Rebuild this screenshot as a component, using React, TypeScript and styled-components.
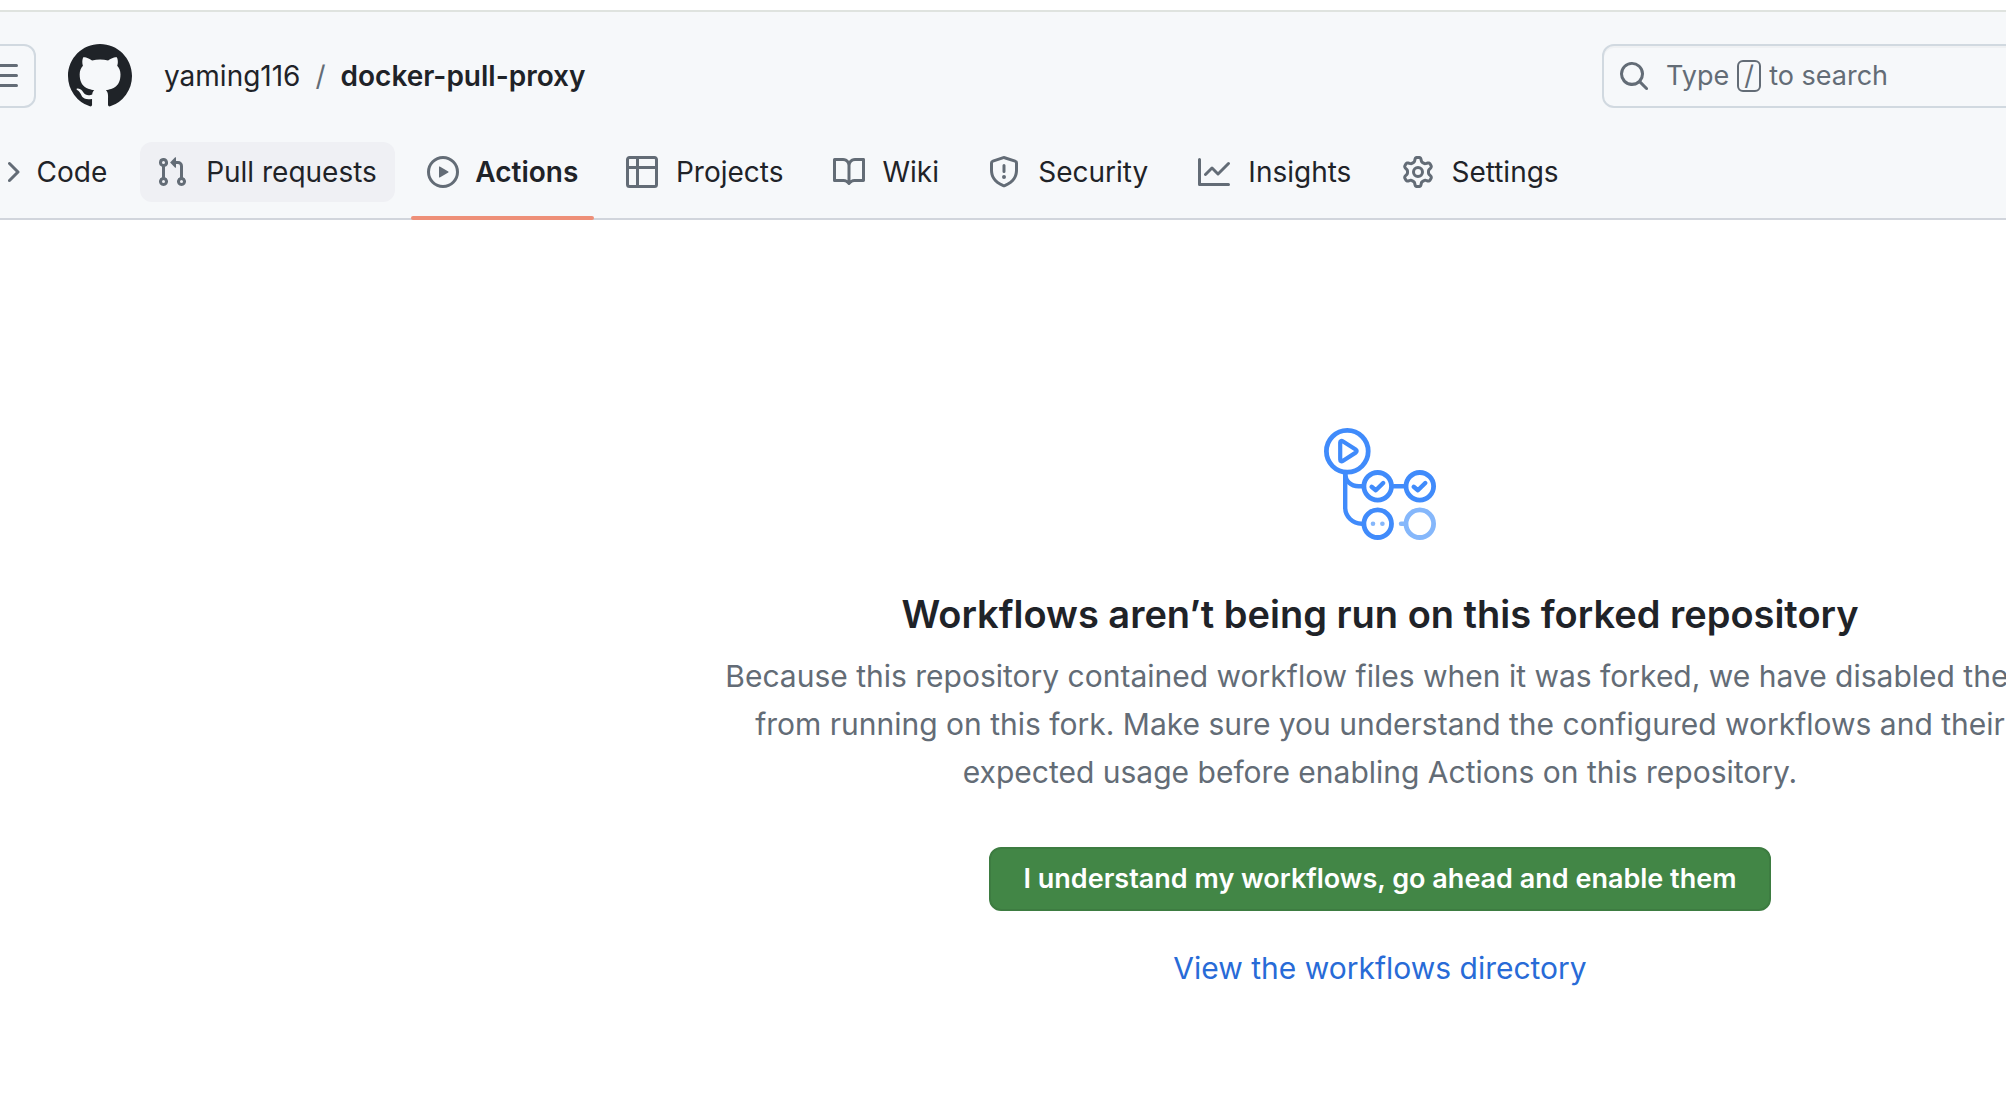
import React from "react";
import styled, { createGlobalStyle } from "styled-components";

const GlobalStyle = createGlobalStyle`
  *, *::before, *::after { box-sizing: border-box; }
  html, body { margin: 0; overflow-x: hidden; background: #ffffff; }
  body {
    font-family: Inter, "Noto Sans", sans-serif;
    font-size: 27px;
    line-height: 40px;
    color: #1f2328;
  }
  a { color: inherit; text-decoration: none; }
  button { font: inherit; cursor: pointer; }
`;

/* The page is wider than the window and scrolled a little to the right. */
const Page = styled.div`
  margin-left: -60px;
  margin-right: -814px;
  padding-top: 10px;
`;

const Header = styled.header`
  background: #f6f8fa;
  border-top: 2px solid #dfe3df;
  border-bottom: 2px solid #d1d5dc;
`;

const TopBar = styled.div`
  display: flex;
  align-items: center;
  padding: 32px 32px 24px;
`;

const MenuButton = styled.button`
  display: grid;
  place-items: center;
  width: 64px;
  height: 64px;
  padding: 0;
  border: 2px solid #d1d9e0;
  border-radius: 12px;
  background: transparent;
  color: #636c76;
`;

const HomeLink = styled.a`
  display: flex;
  margin-left: 32px;
  color: #1f2328;
`;

const Breadcrumb = styled.nav`
  display: flex;
  gap: 15px;
  flex: 1;
  margin-left: 32px;
  font-size: 28px;
`;

const Crumb = styled.a<{ $current?: boolean }>`
  font-weight: ${(p) => (p.$current ? 600 : 400)};
`;

const Separator = styled.span`
  color: #636c76;
`;

const SearchButton = styled.button`
  display: flex;
  align-items: center;
  gap: 16px;
  flex: 0 0 1186px;
  height: 64px;
  padding: 0 14px;
  border: 2px solid #d1d9e0;
  border-radius: 12px;
  background: transparent;
  box-shadow: inset 0 2px 0 rgba(31, 35, 40, 0.03);
  color: #636c76;
`;

const SearchHint = styled.span`
  display: flex;
  align-items: center;
  gap: 8px;
`;

const Key = styled.kbd`
  display: grid;
  place-items: center;
  width: 24px;
  height: 32px;
  border: 2px solid #636c76;
  border-radius: 6px;
  font: inherit;
  line-height: 28px;
`;

const Tabs = styled.nav`
  display: flex;
  gap: 16px;
  padding: 0 32px;
  font-size: 28px;
`;

const Tab = styled.a<{ $selected?: boolean; $hovered?: boolean }>`
  position: relative;
  display: flex;
  align-items: center;
  gap: 16px;
  height: 60px;
  margin: 10px 0 16px;
  padding: 0 16px;
  border-radius: 12px;
  background: ${(p) => (p.$hovered ? "#eff0f4" : "transparent")};
  font-weight: ${(p) => (p.$selected ? 600 : 400)};
  white-space: nowrap;

  svg { color: #636c76; }

  &::after {
    content: "";
    display: ${(p) => (p.$selected ? "block" : "none")};
    position: absolute;
    left: 0;
    right: 0;
    bottom: -18px;
    height: 4px;
    border-radius: 2px;
    background: #ee8f78;
  }
`;

/* Reserves the bold width of the label so that selecting a tab moves nothing. */
const TabLabel = styled.span`
  display: grid;
  justify-items: center;

  &::before {
    content: attr(data-content);
    height: 0;
    visibility: hidden;
    font-weight: 600;
  }
`;

const Main = styled.main`
  display: flex;
  flex-direction: column;
  align-items: center;
  padding: 208px 32px 64px;
  text-align: center;
`;

const Title = styled.h1`
  margin: 44px 0 0;
  font-size: 38px;
  line-height: 60px;
  font-weight: 600;
`;

const Description = styled.p`
  max-width: 1360px;
  margin: 8px 0 0;
  font-size: 30px;
  line-height: 48px;
  color: #636c76;
`;

const EnableButton = styled.button`
  height: 64px;
  margin-top: 51px;
  padding: 0 32px;
  border: 2px solid #3d7c41;
  border-radius: 12px;
  background: #428646;
  color: #ffffff;
  font-weight: 600;
`;

const DirectoryLink = styled.a`
  margin-top: 33px;
  font-size: 30px;
  line-height: 48px;
  color: #286bd7;
`;

const PATHS = {
  bars: "M1 2.75A.75.75 0 0 1 1.75 2h12.5a.75.75 0 0 1 0 1.5H1.75A.75.75 0 0 1 1 2.75Zm0 5A.75.75 0 0 1 1.75 7h12.5a.75.75 0 0 1 0 1.5H1.75A.75.75 0 0 1 1 7.75ZM1.75 12h12.5a.75.75 0 0 1 0 1.5H1.75a.75.75 0 0 1 0-1.5Z",
  mark: "M8 0c4.42 0 8 3.58 8 8a8.013 8.013 0 0 1-5.45 7.59c-.4.08-.55-.17-.55-.38 0-.27.01-1.13.01-2.2 0-.75-.25-1.23-.54-1.48 1.78-.2 3.65-.88 3.65-3.95 0-.88-.31-1.59-.82-2.15.08-.2.36-1.02-.08-2.12 0 0-.67-.22-2.2.82-.64-.18-1.32-.27-2-.27-.68 0-1.36.09-2 .27-1.53-1.03-2.2-.82-2.2-.82-.44 1.1-.16 1.92-.08 2.12-.51.56-.82 1.28-.82 2.15 0 3.06 1.86 3.75 3.64 3.95-.23.2-.44.55-.51 1.07-.46.21-1.61.55-2.33-.66-.15-.24-.6-.83-1.23-.82-.67.01-.27.38.01.53.34.19.73.9.82 1.13.16.45.68 1.31 2.69.94 0 .67.01 1.3.01 1.49 0 .21-.15.45-.55.38A7.995 7.995 0 0 1 0 8c0-4.42 3.58-8 8-8Z",
  search: "M10.68 11.74a6 6 0 0 1-7.922-8.982 6 6 0 0 1 8.982 7.922l3.04 3.04a.749.749 0 0 1-.326 1.275.749.749 0 0 1-.734-.215ZM11.5 7a4.499 4.499 0 1 0-8.997 0A4.499 4.499 0 0 0 11.5 7Z",
  code: "m11.28 3.22 4.25 4.25a.75.75 0 0 1 0 1.06l-4.25 4.25a.749.749 0 0 1-1.275-.326.749.749 0 0 1 .215-.734L13.94 8l-3.72-3.72a.749.749 0 0 1 .326-1.275.749.749 0 0 1 .734.215Zm-6.56 0a.751.751 0 0 1 1.042.018.751.751 0 0 1 .018 1.042L2.06 8l3.72 3.72a.749.749 0 0 1-.326 1.275.749.749 0 0 1-.734-.215L.47 8.53a.75.75 0 0 1 0-1.06Z",
  pull: "M1.5 3.25a2.25 2.25 0 1 1 3 2.122v5.256a2.251 2.251 0 1 1-1.5 0V5.372A2.25 2.25 0 0 1 1.5 3.25Zm5.677-.177L9.573.677A.25.25 0 0 1 10 .854V2.5h1A2.5 2.5 0 0 1 13.5 5v5.628a2.251 2.251 0 1 1-1.5 0V5a1 1 0 0 0-1-1h-1v1.646a.25.25 0 0 1-.427.177L7.177 3.427a.25.25 0 0 1 0-.354ZM3.75 2.5a.75.75 0 1 0 0 1.5.75.75 0 0 0 0-1.5Zm0 9.5a.75.75 0 1 0 0 1.5.75.75 0 0 0 0-1.5Zm8.25.75a.75.75 0 1 0 1.5 0 .75.75 0 0 0-1.5 0Z",
  play: "M8 0a8 8 0 1 1 0 16A8 8 0 0 1 8 0ZM1.5 8a6.5 6.5 0 1 0 13 0 6.5 6.5 0 0 0-13 0Zm4.879-2.773 4.264 2.559a.25.25 0 0 1 0 .428l-4.264 2.559A.25.25 0 0 1 6 10.559V5.442a.25.25 0 0 1 .379-.215Z",
  table: "M0 1.75C0 .784.784 0 1.75 0h12.5C15.216 0 16 .784 16 1.75v12.5A1.75 1.75 0 0 1 14.25 16H1.75A1.75 1.75 0 0 1 0 14.25ZM6.5 6.5v8h7.75a.25.25 0 0 0 .25-.25V6.5Zm8-1.5V1.75a.25.25 0 0 0-.25-.25H6.5V5Zm-13 1.5v7.75c0 .138.112.25.25.25H5v-8ZM5 5V1.5H1.75a.25.25 0 0 0-.25.25V5Z",
  book: "M0 1.75A.75.75 0 0 1 .75 1h4.253c1.227 0 2.317.59 3 1.501A3.743 3.743 0 0 1 11.006 1h4.245a.75.75 0 0 1 .75.75v10.5a.75.75 0 0 1-.75.75h-4.507a2.25 2.25 0 0 0-1.591.659l-.622.621a.75.75 0 0 1-1.06 0l-.622-.621A2.25 2.25 0 0 0 5.258 13H.75a.75.75 0 0 1-.75-.75Zm7.251 10.324.004-5.073-.002-2.253A2.25 2.25 0 0 0 5.003 2.5H1.5v9h3.757a3.75 3.75 0 0 1 1.994.574ZM8.755 4.75l-.004 7.322a3.752 3.752 0 0 1 1.992-.572H14.5v-9h-3.495a2.25 2.25 0 0 0-2.25 2.25Z",
  shield: "M7.467.133a1.748 1.748 0 0 1 1.066 0l5.25 1.68A1.75 1.75 0 0 1 15 3.48V7c0 1.566-.32 3.182-1.303 4.682-.983 1.498-2.585 2.813-5.032 3.855a1.697 1.697 0 0 1-1.33 0c-2.447-1.042-4.049-2.357-5.032-3.855C1.32 10.182 1 8.566 1 7V3.48a1.75 1.75 0 0 1 1.217-1.667Zm.61 1.429a.25.25 0 0 0-.153 0l-5.25 1.68a.25.25 0 0 0-.174.238V7c0 1.358.275 2.666 1.057 3.86.784 1.194 2.121 2.34 4.366 3.297a.196.196 0 0 0 .154 0c2.245-.956 3.582-2.104 4.366-3.298C13.225 9.666 13.5 8.36 13.5 7V3.48a.251.251 0 0 0-.174-.237l-5.25-1.68ZM8.75 4.75v3a.75.75 0 0 1-1.5 0v-3a.75.75 0 0 1 1.5 0ZM9 10.5a1 1 0 1 1-2 0 1 1 0 0 1 2 0Z",
  graph: "M1.5 1.75V13.5h13.75a.75.75 0 0 1 0 1.5H.75a.75.75 0 0 1-.75-.75V1.75a.75.75 0 0 1 1.5 0Zm14.28 2.53-5.25 5.25a.75.75 0 0 1-1.06 0L7 7.06 4.28 9.78a.751.751 0 0 1-1.042-.018.751.751 0 0 1-.018-1.042l3.25-3.25a.75.75 0 0 1 1.06 0L10 7.94l4.72-4.72a.751.751 0 0 1 1.042.018.751.751 0 0 1 .018 1.042Z",
  gear: "M8 0a8.2 8.2 0 0 1 .701.031C9.444.095 9.99.645 10.16 1.29l.288 1.107c.018.066.079.158.212.224.231.114.454.243.668.386.123.082.233.09.299.071l1.103-.303c.644-.176 1.392.021 1.82.63.27.385.506.792.704 1.218.315.675.111 1.422-.364 1.891l-.814.806c-.049.048-.098.147-.088.294.016.257.016.515 0 .772-.01.147.038.246.088.294l.814.806c.475.469.679 1.216.364 1.891a7.977 7.977 0 0 1-.704 1.217c-.428.61-1.176.807-1.82.63l-1.102-.302c-.067-.019-.177-.011-.3.071a5.909 5.909 0 0 1-.668.386c-.133.066-.194.158-.211.224l-.29 1.106c-.168.646-.715 1.196-1.458 1.26a8.006 8.006 0 0 1-1.402 0c-.743-.064-1.289-.614-1.458-1.26l-.289-1.106c-.018-.066-.079-.158-.212-.224a5.738 5.738 0 0 1-.668-.386c-.123-.082-.233-.09-.299-.071l-1.103.303c-.644.176-1.392-.021-1.82-.63a8.12 8.12 0 0 1-.704-1.218c-.315-.675-.111-1.422.363-1.891l.815-.806c.05-.048.098-.147.088-.294a6.214 6.214 0 0 1 0-.772c.01-.147-.038-.246-.088-.294l-.815-.806C.635 6.045.431 5.298.746 4.623a7.92 7.92 0 0 1 .704-1.217c.428-.61 1.176-.807 1.82-.63l1.102.302c.067.019.177.011.3-.071.214-.143.437-.272.668-.386.133-.066.194-.158.211-.224l.29-1.106C6.009.645 6.556.095 7.299.03 7.53.01 7.764 0 8 0Zm-.571 1.525c-.036.003-.108.036-.137.146l-.289 1.105c-.147.561-.549.967-.998 1.189-.173.086-.34.183-.5.29-.417.278-.97.423-1.529.27l-1.103-.303c-.109-.03-.175.016-.195.045-.22.312-.412.644-.573.99-.014.031-.021.11.059.19l.815.806c.411.406.562.957.53 1.456a4.709 4.709 0 0 0 0 .582c.032.499-.119 1.05-.53 1.456l-.815.806c-.081.08-.073.159-.059.19.162.346.353.677.573.989.02.03.085.076.195.046l1.102-.303c.56-.153 1.113-.008 1.53.27.161.107.328.204.501.29.447.222.85.629.997 1.189l.289 1.105c.029.109.101.143.137.146a6.6 6.6 0 0 0 1.142 0c.036-.003.108-.036.137-.146l.289-1.105c.147-.561.549-.967.998-1.189.173-.086.34-.183.5-.29.417-.278.97-.423 1.529-.27l1.103.303c.109.029.175-.016.195-.045.22-.313.411-.644.573-.99.014-.031.021-.11-.059-.19l-.815-.806c-.411-.406-.562-.957-.53-1.456a4.709 4.709 0 0 0 0-.582c-.032-.499.119-1.05.53-1.456l.815-.806c.081-.08.073-.159.059-.19a6.464 6.464 0 0 0-.573-.989c-.02-.03-.085-.076-.195-.046l-1.102.303c-.56.153-1.113.008-1.53-.27a4.44 4.44 0 0 0-.501-.29c-.447-.222-.85-.629-.997-1.189l-.289-1.105c-.029-.11-.101-.143-.137-.146a6.6 6.6 0 0 0-1.142 0ZM11 8a3 3 0 1 1-6 0 3 3 0 0 1 6 0ZM9.5 8a1.5 1.5 0 1 0-3.001.001A1.5 1.5 0 0 0 9.5 8Z",
};

type IconName = keyof typeof PATHS;

function Icon({ name, size = 32 }: { name: IconName; size?: number }) {
  return (
    <svg width={size} height={size} viewBox="0 0 16 16" fill="currentColor" aria-hidden="true">
      <path d={PATHS[name]} />
    </svg>
  );
}

function WorkflowArt() {
  return (
    <svg width="112" height="112" viewBox="0 0 112 112" fill="none" aria-hidden="true">
      <g stroke="#408bfb" strokeWidth="4.8" strokeLinecap="round" strokeLinejoin="round">
        <circle cx="23.3" cy="23.3" r="20.9" />
        <path d="M16.2 14.6c0-1.6 1.2-2.2 2.5-1.4l13 8.4c1.3.8 1.3 2.2 0 3l-13 8.4c-1.3.8-2.5.2-2.5-1.4Z" strokeWidth="4.2" />
        <path d="M21.2 45v34.5c0 9 7.5 16.2 16.5 16.2" strokeWidth="4.4" />
        <path d="M21.2 45c0 8 5.5 13.3 13.5 13.3h3" strokeWidth="4.4" />
        <circle cx="53.7" cy="58.3" r="13.8" />
        <circle cx="95.8" cy="58.3" r="13.8" />
        <path d="M70 58.3h9.5" strokeWidth="4.4" />
        <circle cx="53.7" cy="95.7" r="13.8" />
        <path d="m47.6 58.8 4.2 3.5 7.4-7.3M89.7 58.8l4.2 3.5 7.4-7.3" strokeWidth="4.4" />
      </g>
      <g stroke="#85b7fb" strokeWidth="4.8" strokeLinecap="round">
        <circle cx="95.8" cy="95.7" r="13.8" />
        <path d="M77 95.7h3" strokeWidth="4.4" />
      </g>
      <circle cx="49" cy="95.7" r="2.3" fill="#85b7fb" />
      <circle cx="58.4" cy="95.7" r="2.3" fill="#85b7fb" />
    </svg>
  );
}

const TABS: { label: string; icon: IconName; selected?: boolean; hovered?: boolean }[] = [
  { label: "Code", icon: "code" },
  { label: "Pull requests", icon: "pull", hovered: true },
  { label: "Actions", icon: "play", selected: true },
  { label: "Projects", icon: "table" },
  { label: "Wiki", icon: "book" },
  { label: "Security", icon: "shield" },
  { label: "Insights", icon: "graph" },
  { label: "Settings", icon: "gear" },
];

export default function App() {
  return (
    <Page>
      <GlobalStyle />
      <Header>
        <TopBar>
          <MenuButton type="button" aria-label="Open menu">
            <Icon name="bars" />
          </MenuButton>
          <HomeLink href="#" aria-label="Homepage">
            <Icon name="mark" size={64} />
          </HomeLink>
          <Breadcrumb aria-label="Breadcrumb">
            <Crumb href="#">yaming116</Crumb>
            <Separator>/</Separator>
            <Crumb href="#" $current>
              docker-pull-proxy
            </Crumb>
          </Breadcrumb>
          <SearchButton type="button">
            <Icon name="search" />
            <SearchHint>
              Type <Key>/</Key> to search
            </SearchHint>
          </SearchButton>
        </TopBar>
        <Tabs aria-label="Repository">
          {TABS.map((tab) => (
            <Tab
              key={tab.label}
              href="#"
              $selected={tab.selected}
              $hovered={tab.hovered}
              aria-current={tab.selected ? "page" : undefined}
            >
              <Icon name={tab.icon} />
              <TabLabel data-content={tab.label}>{tab.label}</TabLabel>
            </Tab>
          ))}
        </Tabs>
      </Header>
      <Main>
        <WorkflowArt />
        <Title>Workflows aren’t being run on this forked repository</Title>
        <Description>
          Because this repository contained workflow files when it was forked, we have disabled them
          from running on this fork. Make sure you understand the configured workflows and their
          expected usage before enabling Actions on this repository.
        </Description>
        <EnableButton type="button">I understand my workflows, go ahead and enable them</EnableButton>
        <DirectoryLink href="#">View the workflows directory</DirectoryLink>
      </Main>
    </Page>
  );
}
